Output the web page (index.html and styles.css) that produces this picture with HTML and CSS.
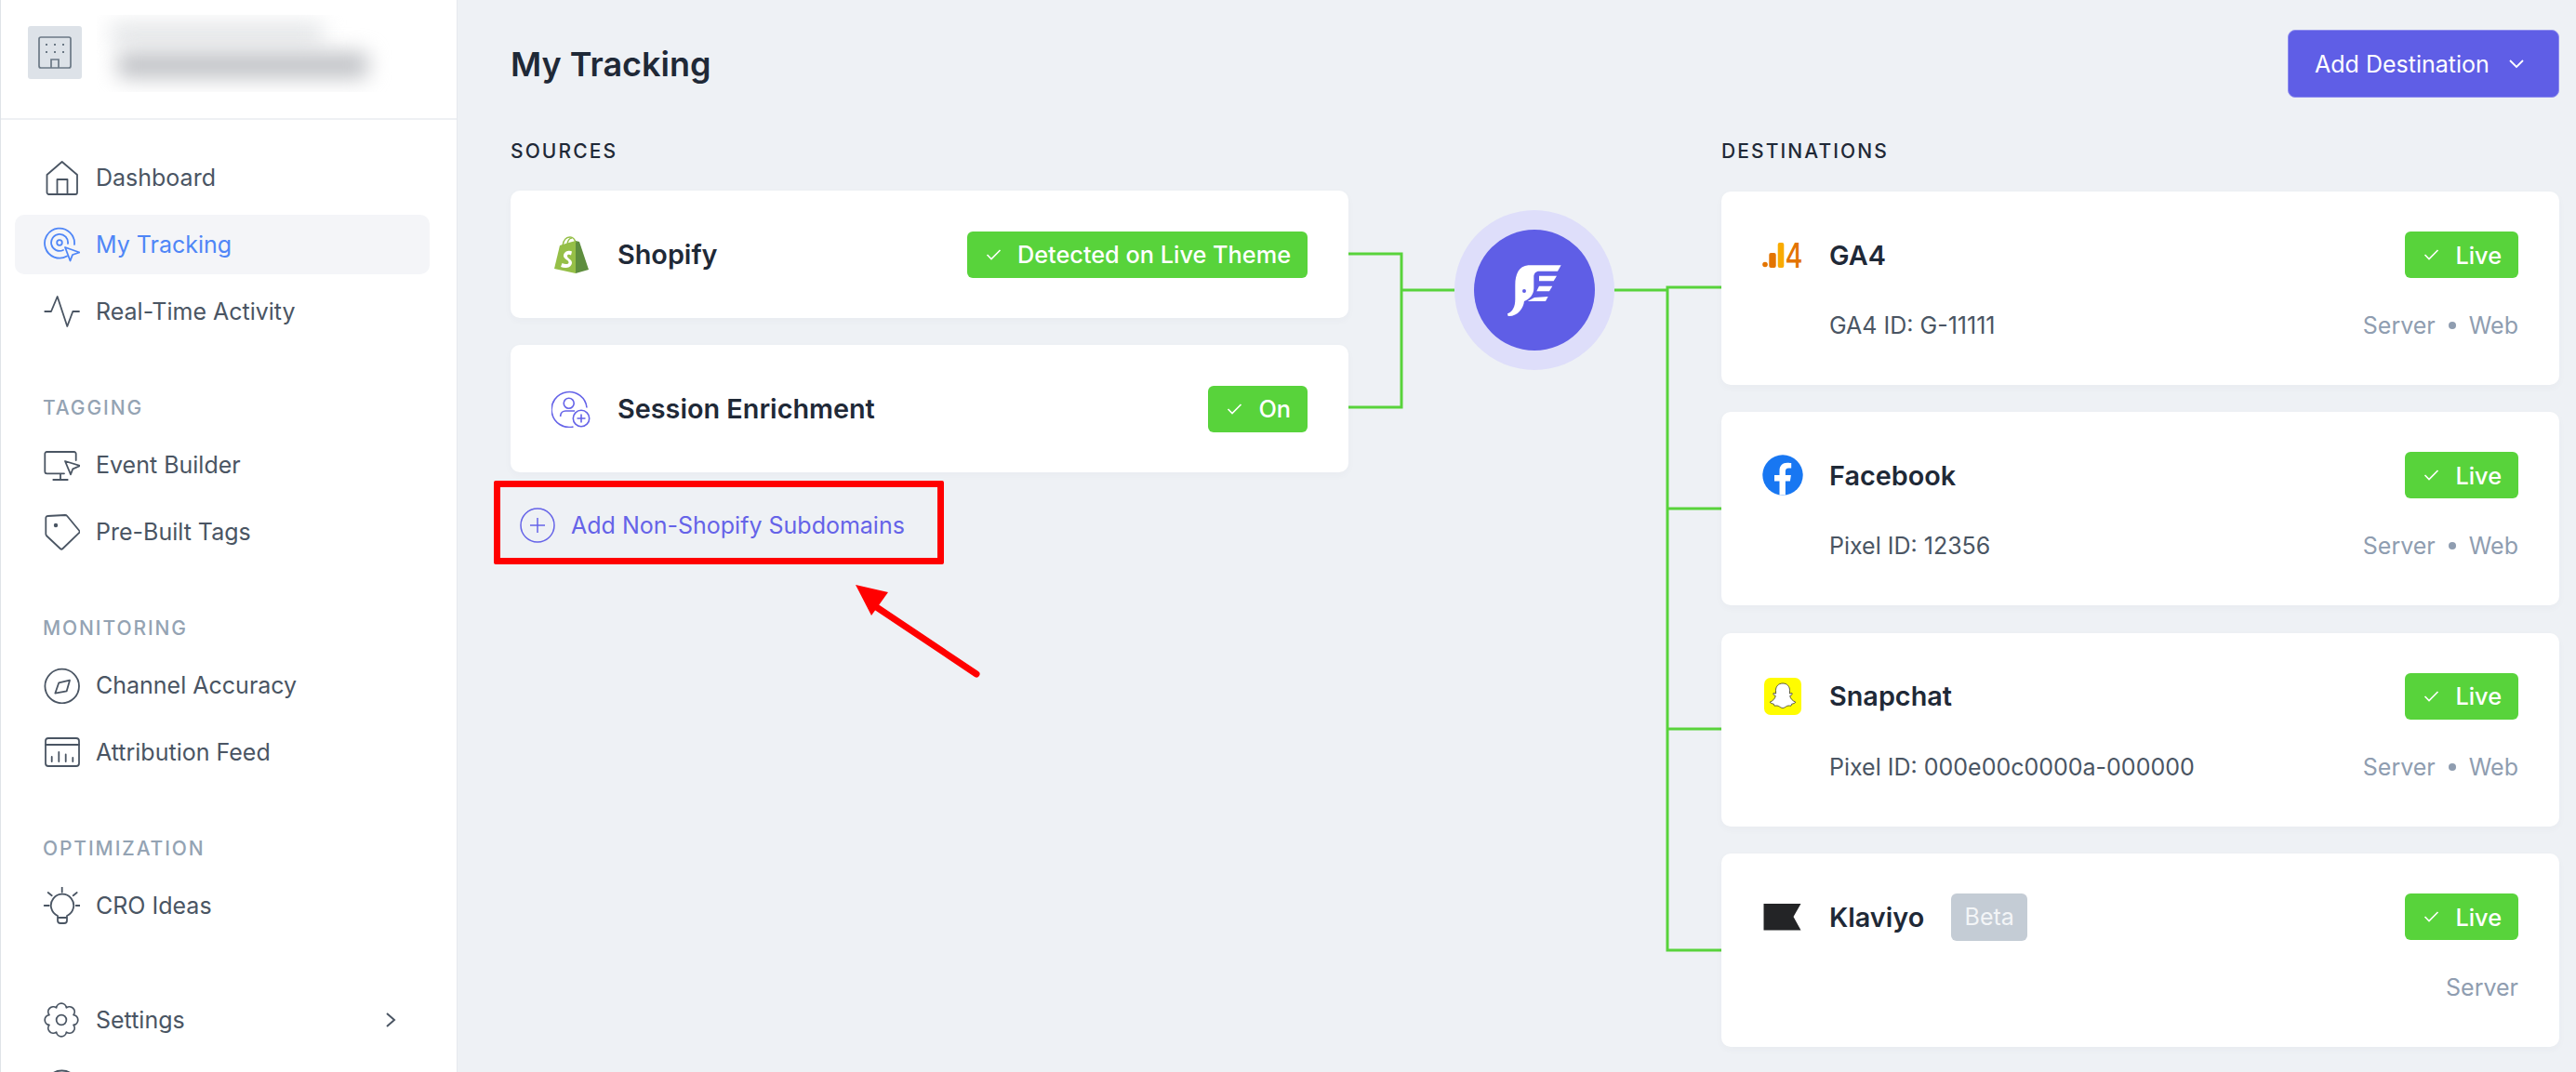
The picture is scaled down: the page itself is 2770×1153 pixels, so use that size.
FILE: index.html
```html
<!DOCTYPE html>
<html lang="en">
<head>
  <meta charset="UTF-8" />
  <title>My Tracking</title>
  <link rel="stylesheet" href="styles.css">
</head>
<body>
  <aside class="sidebar">
    <div class="brand">
      <div class="brand-logo">
        <svg viewBox="0 0 38 38" width="38" height="38" fill="none" stroke="#6b7885" stroke-width="1.7">
          <rect x="2" y="2" width="34" height="33" rx="2"/>
          <path d="M15 35V26h8v9"/>
          <path d="M10 9v2M19 9v2M28 9v2M10 17v2M19 17v2M28 17v2" stroke-width="2"/>
        </svg>
      </div>
      <div class="brand-blur"><span class="blur-top"></span><span class="blur-bottom"></span></div>
    </div>

    <nav class="nav">
      <div class="nav-group">
        <a class="nav-item">
          <svg class="nav-icon" viewBox="0 0 40 40"><path d="M4.5 17 20.7 3 37 17v19a2 2 0 0 1-2 2H6.500a2 2 0 0 1-2-2Z"/><path d="M15.500 38V22h11v16"/></svg>
          Dashboard
        </a>
        <a class="nav-item active">
          <svg class="nav-icon" viewBox="0 0 40 40"><path d="M26 32.500A16 16 0 1 1 34 20"/><path d="M22 26A9 9 0 1 1 27 19"/><circle cx="18" cy="18" r="2.800"/><path d="M24 23l15.500 5.500-7.500 2.500-2.500 6.500Z"/></svg>
          My Tracking
        </a>
        <a class="nav-item">
          <svg class="nav-icon" viewBox="0 0 40 40"><path d="M2.300 20H9l6.700-16 10.600 32 6-16H39"/></svg>
          Real-Time Activity
        </a>
      </div>

      <div class="nav-group">
        <div class="nav-label">TAGGING</div>
        <a class="nav-item">
          <svg class="nav-icon" viewBox="0 0 40 40"><path d="M35.700 15V8a2 2 0 0 0-2-2H4.300a2 2 0 0 0-2 2v19.300a2 2 0 0 0 2 2H23M19 29.300V36M11.300 36h15.400"/><path d="M24 16l16 5-7.700 3.300-2.300 6Z"/></svg>
          Event Builder
        </a>
        <a class="nav-item">
          <svg class="nav-icon" viewBox="0 0 40 40"><path d="M3.300 5a2 2 0 0 1 2-2L24 2a3 3 0 0 1 2.200 1L39 18.500a2 2 0 0 1 0 2.700L21.500 38a2 2 0 0 1-2.800 0L4.300 24.500a3 3 0 0 1-1-2.200Z"/><circle class="dot" cx="14" cy="13" r="1.300"/></svg>
          Pre-Built Tags
        </a>
      </div>

      <div class="nav-group">
        <div class="nav-label">MONITORING</div>
        <a class="nav-item">
          <svg class="nav-icon" viewBox="0 0 40 40"><circle cx="20.700" cy="21" r="18.300"/><path d="M29 14.700 25.700 26.300 13.300 28.700 17.300 17.300Z"/></svg>
          Channel Accuracy
        </a>
        <a class="nav-item">
          <svg class="nav-icon" viewBox="0 0 40 40"><rect x="3" y="5" width="36" height="30" rx="3"/><path d="M3 12h36M9.700 25v5M17.300 20v10M24.700 22.500V30M32.300 26v4"/></svg>
          Attribution Feed
        </a>
      </div>

      <div class="nav-group">
        <div class="nav-label">OPTIMIZATION</div>
        <a class="nav-item">
          <svg class="nav-icon" viewBox="0 0 40 40"><path d="M16 31a12.200 12.200 0 1 1 10 0v5a3 3 0 0 1-3 3h-4a3 3 0 0 1-3-3ZM16 33h10M20.700.500v5M1.700 20h5M35.700 20h5M5.700 6l4 3.300M36.700 6l-4 3.300"/></svg>
          CRO Ideas
        </a>
      </div>

      <div class="nav-bottom">
        <a class="nav-item">
          <svg class="nav-icon" viewBox="0 0 41 41"><path d="M14.950 7.100A5.600 5.600 0 0 1 26.050 7.100 5.600 5.600 0 0 1 33.900 14.950 5.600 5.600 0 0 1 33.900 26.050 5.600 5.600 0 0 1 26.050 33.900 5.600 5.600 0 0 1 14.950 33.900 5.600 5.600 0 0 1 7.100 26.050 5.600 5.600 0 0 1 7.100 14.950 5.600 5.600 0 0 1 14.950 7.100Z"/><circle cx="20.500" cy="20.500" r="5.500"/></svg>
          Settings
          <svg class="nav-chevron" viewBox="0 0 12 18" width="12" height="18"><path d="M2 2l8 7-8 7"/></svg>
        </a>
        <a class="nav-item">
          <svg class="nav-icon" viewBox="0 0 40 40"><circle cx="20.500" cy="20.500" r="18"/></svg>
        </a>
      </div>
    </nav>
  </aside>

  <main class="main">
    <div class="header">
      <h1>My Tracking</h1>
      <button class="add-btn">
        Add Destination
        <svg viewBox="0 0 16 10" width="16" height="10" fill="none" stroke="#fff" stroke-width="1.800"><path d="M1 1l7 7 7-7"/></svg>
      </button>
    </div>

    <div class="board">
      <section class="sources">
        <h2 class="section-title">SOURCES</h2>
        <div class="source-list">
          <div class="card source-card">
            <svg class="card-icon" viewBox="0 0 42 40" width="42" height="40">
              <path d="M3 35 9 10Q18 7 26 5V40Z" fill="#95bf47"/>
              <path d="M26 5 30 6 40 36 26 40Z" fill="#5e8e3e"/>
              <path d="M12 10C13 4 16 1 20 1 23 1 25 3 26 7M17 8C18 4 20 2 22 2" fill="none" stroke="#95bf47" stroke-width="1.400"/>
              <path d="M22 16.500c-2-1.500-8-1-9 4-.8 4 6 5 5.500 8-.3 2-4 2-7 .5l-1.500 4c4 2 11 1.500 12-4 .6-4-5.500-5-5-8 .1-1.500 2.500-1.500 4-.5Z" fill="#fff"/>
            </svg>
            <span class="card-name">Shopify</span>
            <span class="badge"><svg class="check" viewBox="0 0 16 12"><path d="M1 6l4.500 4.500L15 1"/></svg>Detected on Live Theme</span>
          </div>
          <div class="card source-card">
            <svg class="card-icon" viewBox="0 0 42 40" width="42" height="40" fill="none" stroke="#6563e8" stroke-width="1.600">
              <path d="M38 18.500A19 19 0 1 0 23.500 39"/>
              <circle cx="18.700" cy="13.700" r="5.500"/>
              <path d="M9.700 28v-1a5.500 5.500 0 0 1 5.500-5H25"/>
              <circle cx="32" cy="30" r="8.700"/>
              <path d="M32 25.500v9M27.500 30h9"/>
            </svg>
            <span class="card-name">Session Enrichment</span>
            <span class="badge"><svg class="check" viewBox="0 0 16 12"><path d="M1 6l4.500 4.500L15 1"/></svg>On</span>
          </div>
        </div>

        <a class="add-link">
          <svg viewBox="0 0 38 38" width="38" height="38" fill="none" stroke="#6563e8" stroke-width="1.500"><circle cx="19" cy="19" r="18"/><path d="M19 11v16M11 19h16"/></svg>
          Add Non-Shopify Subdomains
        </a>
        <div class="callout-box"></div>
        <svg class="callout-arrow" viewBox="0 0 145 108" width="145" height="108">
          <path d="M23 25 135 100" stroke="#ff0000" stroke-width="7" stroke-linecap="round"/>
          <path d="M5 4 40 12 22 37Z" fill="#ff0000"/>
        </svg>
      </section>

      <svg class="flow" viewBox="0 0 401 922" width="401" height="922">
        <g fill="none" stroke="#58d33b" stroke-width="3">
          <path d="M0 68H57V233H0"/>
          <path d="M57 107H114"/>
          <path d="M286 107H343"/>
          <path d="M401 104H343V817H401"/>
          <path d="M343 342H401M343 579H401"/>
        </g>
        <circle cx="200" cy="107" r="86" fill="#dedefa"/>
        <circle cx="200" cy="107" r="65" fill="#5f5ee6"/>
        <g transform="translate(-50 -25) scale(.3333)" fill="#fff">
          <path d="M836 316H730C700 318 688 345 688 380V425C688 450 680 465 663 472L665 480C695 482 715 455 717 432C735 425 748 410 748 390V352C748 342 755 335 765 335H825Z"/>
          <path d="M765 350H822L812 367H765Z"/>
          <path d="M765 383H808L798 400H757Z"/>
          <path d="M750 420 794 417 786 432H728Z"/>
          <circle cx="717" cy="399" r="6" fill="#5f5ee6"/>
        </g>
      </svg>

      <section class="destinations">
        <h2 class="section-title">DESTINATIONS</h2>
        <div class="dest-list">
          <div class="card dest-card">
            <div class="dest-top">
              <svg class="dest-icon" viewBox="0 0 44 44" width="44" height="44">
                <circle cx="3" cy="32.500" r="2.800" fill="#e37400"/>
                <rect x="7.300" y="20" width="7.400" height="16" rx="2" fill="#e37400"/>
                <rect x="16.700" y="9" width="6.600" height="27" rx="2" fill="#f9ab00"/>
                <text x="24.500" y="36" class="ga-four" textLength="19" lengthAdjust="spacingAndGlyphs">4</text>
              </svg>
              <span class="card-name">GA4</span>
              <span class="badge"><svg class="check" viewBox="0 0 16 12"><path d="M1 6l4.500 4.500L15 1"/></svg>Live</span>
            </div>
            <div class="dest-bottom">
              <span class="dest-id">GA4 ID: G-11111</span>
              <span class="dest-type">Server<i class="sep"></i>Web</span>
            </div>
          </div>

          <div class="card dest-card">
            <div class="dest-top">
              <svg class="dest-icon" viewBox="0 0 44 44" width="44" height="44">
                <circle cx="22" cy="22" r="21.700" fill="#1877f2"/>
                <path d="M18.500 43.500V28.500H13V22h5.500v-4.800c0-5.500 3.300-8.500 8.300-8.500 2.400 0 4.400.4 4.400.4v5.400h-2.800c-2.700 0-3.500 1.700-3.500 3.400V22h6l-1 6.500h-5v15Z" fill="#fff"/>
              </svg>
              <span class="card-name">Facebook</span>
              <span class="badge"><svg class="check" viewBox="0 0 16 12"><path d="M1 6l4.500 4.500L15 1"/></svg>Live</span>
            </div>
            <div class="dest-bottom">
              <span class="dest-id">Pixel ID: 12356</span>
              <span class="dest-type">Server<i class="sep"></i>Web</span>
            </div>
          </div>

          <div class="card dest-card">
            <div class="dest-top">
              <svg class="dest-icon" viewBox="0 0 44 44" width="44" height="44">
                <rect x="2" y="2" width="40" height="40" rx="7" fill="#fffc00"/>
                <path d="M22 8c5 0 7.500 3.700 7.500 7.500l-.1 3.500 2.600-.5c.6 1 0 2-2.300 3 .6 3 3 5.500 6 6.500-.3 1.500-2.500 1.800-4 2.200l-.8 2c-2-.3-3.800-.4-5.400.8-1.300.9-2.300 1.500-3.500 1.500s-2.200-.6-3.500-1.500c-1.600-1.200-3.400-1.100-5.400-.8l-.8-2c-1.500-.4-3.700-.7-4-2.200 3-1 5.400-3.500 6-6.500-2.300-1-2.900-2-2.300-3l2.600.5-.1-3.500C14.500 11.700 17 8 22 8Z" fill="#fff" stroke="#333" stroke-width=".8"/>
              </svg>
              <span class="card-name">Snapchat</span>
              <span class="badge"><svg class="check" viewBox="0 0 16 12"><path d="M1 6l4.500 4.500L15 1"/></svg>Live</span>
            </div>
            <div class="dest-bottom">
              <span class="dest-id">Pixel ID: 000e00c0000a-000000</span>
              <span class="dest-type">Server<i class="sep"></i>Web</span>
            </div>
          </div>

          <div class="card dest-card">
            <div class="dest-top">
              <svg class="dest-icon" viewBox="0 0 44 44" width="44" height="44">
                <path d="M1.500 8H41.500L33.500 22 41.500 36.500H1.500Z" fill="#232426"/>
              </svg>
              <span class="card-name">Klaviyo</span>
              <span class="beta">Beta</span>
              <span class="badge"><svg class="check" viewBox="0 0 16 12"><path d="M1 6l4.500 4.500L15 1"/></svg>Live</span>
            </div>
            <div class="dest-bottom">
              <span class="dest-id"></span>
              <span class="dest-type">Server</span>
            </div>
          </div>
        </div>
      </section>
    </div>
  </main>
</body>
</html>
```

FILE: styles.css
```css
* {
  box-sizing: border-box;
  margin: 0;
  padding: 0;
}

html, body {
  height: 100%;
  overflow: hidden;
}

body {
  display: flex;
  font-family: 'Inter', sans-serif;
  background-color: #eef1f5;
  color: #1f2937;
}

.sidebar {
  width: 492px;
  height: 100vh;
  flex-shrink: 0;
  background: #fff;
  border-left: 1px solid #dfe3e8;
  border-right: 1px solid #e6e9ee;
  overflow: hidden;
}

.brand {
  height: 129px;
  display: flex;
  align-items: center;
  padding-left: 29px;
  border-bottom: 2px solid #eef0f3;
}

.brand-logo {
  width: 58px;
  height: 57px;
  background: #dde2e8;
  border-radius: 3px;
  display: flex;
  align-items: center;
  justify-content: center;
  margin-top: -14px;
}

.brand-blur {
  width: 321px;
  height: 83px;
  margin-left: 16px;
  margin-top: -12px;
  position: relative;
  overflow: hidden;
}

.blur-top, .blur-bottom {
  position: absolute;
  border-radius: 8px;
  filter: blur(11px);
}

.blur-top {
  left: 14px;
  top: 8px;
  width: 230px;
  height: 24px;
  background: #e4e6e8;
}

.blur-bottom {
  left: 22px;
  top: 40px;
  width: 270px;
  height: 28px;
  background: #c0c2c6;
}

.nav {
  padding-top: 30px;
}

.nav-group {
  margin-bottom: 57px;
}

.nav-label {
  height: 30px;
  line-height: 30px;
  margin: 0 0 14px 45px;
  font-size: 21px;
  font-weight: 500;
  letter-spacing: 1.900px;
  color: #94a3b3;
}

.nav-item {
  height: 64px;
  margin: 0 29px 8px 15px;
  padding-left: 30px;
  display: flex;
  align-items: center;
  gap: 17px;
  border-radius: 10px;
  font-size: 25px;
  color: #4a5563;
}

.nav-group .nav-item:last-child {
  margin-bottom: 0;
}

.nav-item.active {
  background: #f4f5f8;
  color: #4f86f7;
}

.nav-icon {
  width: 40px;
  height: 40px;
  flex-shrink: 0;
  fill: none;
  stroke: currentColor;
  stroke-width: 1.800;
  stroke-linejoin: round;
  stroke-linecap: round;
}

.nav-icon .dot {
  fill: currentColor;
}

.nav-chevron {
  margin-left: auto;
  margin-right: 36px;
  fill: none;
  stroke: currentColor;
  stroke-width: 2;
}

.nav-bottom {
  margin-top: 59px;
}

.main {
  flex: 1;
  padding: 32px 18px 0 57px;
  min-width: 0;
}

.header {
  display: flex;
  justify-content: space-between;
  align-items: center;
  height: 73px;
}

h1 {
  font-size: 36px;
  font-weight: 600;
  color: #1f2937;
}

.add-btn {
  width: 292px;
  height: 73px;
  border: 1px solid #8e8dee;
  border-radius: 8px;
  background: #5f5ee6;
  color: #fff;
  font-family: inherit;
  font-size: 25px;
  display: flex;
  align-items: center;
  gap: 21px;
  padding-left: 28px;
}

.board {
  display: grid;
  grid-template-columns: 901px 401px 901px;
  margin-top: 46px;
}

.section-title {
  height: 24px;
  line-height: 24px;
  margin-bottom: 30px;
  font-size: 21px;
  font-weight: 500;
  letter-spacing: 2.100px;
  color: #1f2937;
}

.card {
  background: #fff;
  border-radius: 10px;
  box-shadow: 0 3px 8px rgba(60, 70, 90, 0.03);
}

.sources {
  position: relative;
}

.source-list {
  display: flex;
  flex-direction: column;
  gap: 29px;
}

.source-card {
  height: 137px;
  display: flex;
  align-items: center;
  padding: 0 44px;
}

.card-icon {
  flex-shrink: 0;
  margin-right: 29px;
}

.card-name {
  font-size: 28.800px;
  font-weight: 600;
  color: #1f2937;
}

.badge {
  margin-left: auto;
  height: 50px;
  display: flex;
  align-items: center;
  gap: 17px;
  padding: 0 18px 0 20px;
  border-radius: 6px;
  background: #58d33b;
  color: #fff;
  font-size: 25.300px;
  font-weight: 500;
}

.check {
  width: 17px;
  height: 12px;
  fill: none;
  stroke: #fff;
  stroke-width: 1.600;
}

.add-link {
  height: 40px;
  margin-top: 37px;
  padding-left: 10px;
  display: flex;
  align-items: center;
  gap: 17px;
  font-size: 25px;
  color: #6563e8;
}

.callout-box {
  position: absolute;
  left: -18px;
  top: 366px;
  width: 484px;
  height: 90px;
  border: 7px solid #ff0000;
  border-radius: 2px;
}

.callout-arrow {
  position: absolute;
  left: 366px;
  top: 474px;
}

.flow {
  margin-top: 54px;
}

.dest-list {
  display: flex;
  flex-direction: column;
  gap: 29.400px;
  padding-top: 1px;
}

.dest-card {
  height: 208px;
  padding: 43px 44px 0;
}

.dest-top {
  display: flex;
  align-items: center;
  height: 50px;
}

.dest-icon {
  flex-shrink: 0;
  margin-right: 28px;
}

.beta {
  margin-left: 29px;
  width: 82px;
  height: 51px;
  display: flex;
  align-items: center;
  justify-content: center;
  border-radius: 6px;
  background: #c4ccd5;
  color: #f3f5f7;
  font-size: 25px;
}

.dest-bottom {
  display: flex;
  justify-content: space-between;
  align-items: center;
  margin-top: 34px;
  height: 34px;
}

.dest-id {
  margin-left: 72px;
  font-size: 25px;
  color: #4a5563;
}

.dest-type {
  display: flex;
  align-items: center;
  font-size: 25px;
  color: #8f9db0;
}

.sep {
  width: 8px;
  height: 8px;
  margin: 0 14px;
  border-radius: 50%;
  background: #8f9db0;
}

.ga-four {
  font-family: 'Inter', sans-serif;
  font-size: 37px;
  font-weight: 500;
  fill: #e37400;
}
```
